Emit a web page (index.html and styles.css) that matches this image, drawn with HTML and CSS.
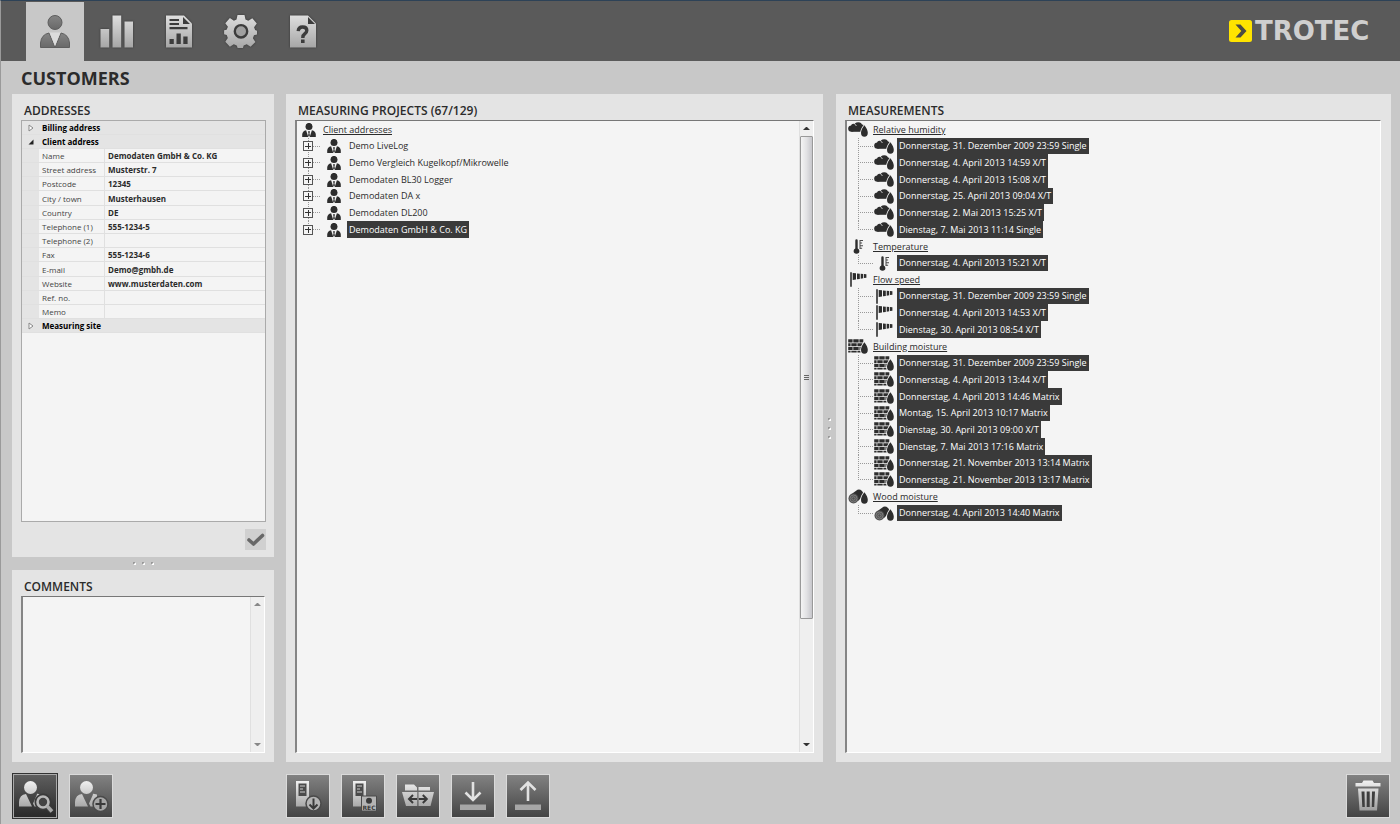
FILE: index.html
```html
<!DOCTYPE html>
<html lang="en">
<head>
<meta charset="utf-8">
<title>Customers</title>
<link rel="stylesheet" href="styles.css">
</head>
<body>
<svg class="sprite" aria-hidden="true">
  <defs>
    <linearGradient id="silver" x1="0" y1="0" x2="0" y2="1">
      <stop offset="0" stop-color="#dedede"/><stop offset="1" stop-color="#a6a6a6"/>
    </linearGradient>
    <linearGradient id="tool" gradientUnits="userSpaceOnUse" x1="0" y1="6" x2="0" y2="36">
      <stop offset="0" stop-color="#f0f0f0"/><stop offset="1" stop-color="#9c9c9c"/>
    </linearGradient>
    <linearGradient id="grey" x1="0" y1="0" x2="0" y2="1">
      <stop offset="0" stop-color="#858585"/><stop offset="1" stop-color="#686868"/>
    </linearGradient>
  </defs>
  <symbol id="person" viewBox="0 0 14 14">
    <ellipse cx="7" cy="3.500" rx="3.500" ry="3.600"/>
    <path d="M.2 14v-2.500q.2-3.400 3.900-4.200L6.300 14zM13.800 14v-2.500q-.2-3.400-3.900-4.200L7.700 14zM6.200 8.200h1.600l.2.800-.6.900.5 2.600-.9 1.300-.9-1.300.5-2.600-.6-.9z"/>
  </symbol>
  <symbol id="drop" viewBox="0 0 20 15">
    <path d="M16.400 3.200q3.400 4.300 3.400 7.600 0 4-3.400 4T13 10.800q0-3.300 3.400-7.600z" stroke="#f4f4f4" stroke-width="1.600" paint-order="stroke"/>
  </symbol>
  <symbol id="humidity" viewBox="0 0 20 15">
    <circle cx="3.400" cy="6.600" r="3.200"/><circle cx="5.600" cy="4.300" r="2.600"/><circle cx="10.200" cy="4.200" r="4"/><circle cx="13.800" cy="5.400" r="3"/>
    <path d="M3.400 5h10v4.800h-10z"/>
    <path d="M6.600 2.200q1.500.3 1.700 1.800" fill="none" stroke="#f4f4f4" stroke-width=".7"/>
    <use href="#drop"/>
  </symbol>
  <symbol id="temperature" viewBox="0 0 20 15">
    <path d="M7.300 1.500q0-1.200 1.200-1.200t1.200 1.200v8q1.700.8 1.700 2.500 0 2.700-2.900 2.700T5.600 12q0-1.700 1.700-2.500z"/>
    <path d="M11.500 1h1v9h-1zM12.500 1h2.500v1h-2.500zM12.500 3.600h1.600v1h-1.600zM12.500 6.200h2.500v1h-2.500zM12.500 8.800h1.600v1h-1.600z" opacity=".85"/>
  </symbol>
  <symbol id="flow" viewBox="0 0 20 15">
    <path d="M2.200.2h1.600v14.600H2.200zM4.700 1l3.300.3v6.200l-3.300.4zM9 1.500l2.800.2v5.200L9 7.300zM12.700 1.800l2.500.2v4.300l-2.500.4zM16 2.100l2.400.2v3.500l-2.400.3z"/>
  </symbol>
  <symbol id="building" viewBox="0 0 20 15">
    <path d="M.2.300h4.400v3.200H.2zM5.300.300h5.400v3.200H5.300zM11.400.300h3.900v3.200h-3.900zM.2 4.200h2.400v3.100H.2zM3.300 4.200h5.400v3.100H3.300zM9.400 4.200h5.200v3.100H9.400zM.2 8h4.400v3.100H.2zM5.300 8h5.400v3.100H5.300zM11.400 8h2v3.100h-2zM.2 11.800h2.400v1.700H.2zM3.300 11.800h5.400v1.700H3.300zM9.400 11.800h3.200v1.700H9.400z"/>
    <use href="#drop"/>
  </symbol>
  <symbol id="wood" viewBox="0 0 20 15">
    <path d="M1.500 6.500 9.500.7Q12 0 14 2t1.500 4.500L10 12z"/>
    <circle cx="5.500" cy="9.500" r="5" fill="#505050"/>
    <circle cx="5.500" cy="9.500" r="3.500" fill="none" stroke="#999" stroke-width=".6"/>
    <circle cx="5.500" cy="9.500" r="1.700" fill="none" stroke="#999" stroke-width=".6"/>
    <use href="#drop"/>
  </symbol>
  <symbol id="client" viewBox="0 0 42 42">
    <circle cx="16.500" cy="12.500" r="6.500"/>
    <path d="M5 31.500V27q.5-7.500 7-8l6 12.500zM27 19.500q-5.500-1.500-4 0l-4 9 1.500 3h7z"/>
  </symbol>
</svg>

<header class="topbar">
  <nav class="tabs" aria-label="Sections">
    <button class="tab tab-active" aria-label="Customers" aria-current="page">
      <svg viewBox="0 0 34 34"><g fill="url(#grey)" stroke="#5e5e5e"><circle cx="17" cy="8.500" r="7"/><path d="M2.500 33.500V29q.8-8.500 8.500-10l6 14.500zM31.500 33.500V29q-.8-8.500-8.500-10l-6 14.500z"/></g><path d="M11.500 18.500h11L17 32z" fill="#dcdcdc"/></svg>
    </button>
    <button class="tab" aria-label="Measurements">
      <svg viewBox="0 0 34 34"><path fill="url(#silver)" d="M.5 15h8.700v18.500H.5zM12.500 1.500h8.700v32h-8.700zM24.500 7.500h8.500v26h-8.500z"/></svg>
    </button>
    <button class="tab" aria-label="Reports">
      <svg viewBox="0 0 34 34"><path fill="url(#silver)" d="M4 1.500h18l8 8v24H4z"/><path fill="#3c3c3c" d="M21 3v7h7zM7.500 5h9.500v2H7.500zM7.500 9h9.500v2H7.500zM7.500 13h18v2.300h-18zM7.500 25h4.300v5H7.500zM14.500 19.500h4.300V30h-4.300zM21.300 22.500h4.300V30h-4.300z"/></svg>
    </button>
    <button class="tab" aria-label="Settings">
      <svg viewBox="0 0 34 34"><path fill="url(#silver)" d="M13.500 1h7l1 4.600 2.800 1.200 4-2.600 4.500 5.300-2.700 3.800 1 2.800 1.900.6v3.700l-3 .9-1.100 2.900 2.500 3.700-4.800 4.900-3.900-2.500-3 1.200-.9 3h-5l-1.100-3.100-2.900-1.200-3.900 2.500-4.600-5 2.500-3.700-1.100-2.900-2.600-.8v-4l2.500-.6 1.300-2.900L1.300 9.300 5.900 4l4 2.700 2.600-1.100z"/><circle cx="17" cy="17.300" r="6.200" fill="#a0a0a0" stroke="#3c3c3c" stroke-width="2.400"/></svg>
    </button>
    <button class="tab" aria-label="Help">
      <svg viewBox="0 0 34 34"><path fill="url(#silver)" d="M4 1.500h18l8 8v24H4z"/><path fill="#3c3c3c" d="M22 3v7h7z"/><path fill="none" stroke="#3c3c3c" stroke-width="3.400" d="M12.200 17.200q.3-4.200 4.400-4.200 4.200 0 4.200 3.600 0 2-2.200 3.400-1.800 1.100-1.800 4"/><path fill="#3c3c3c" d="M15 25.500h3.600V29H15z"/></svg>
    </button>
  </nav>
  <div class="brand">
    <svg viewBox="0 0 23 22" aria-hidden="true"><rect width="23" height="22" rx="2.500" fill="#ffe400"/><path fill="#4c4c44" d="M6.500 4.500h5L17.500 11l-6 6.500h-5L12.300 11z"/></svg>
    <span>TROTEC</span>
  </div>
</header>

<h1 class="page-title">CUSTOMERS</h1>

<main class="workspace">
  <div class="sidebar">
    <section class="panel addresses">
      <h2>ADDRESSES</h2>
      <div class="address-box">
        <table class="properties">
          <colgroup><col class="col-toggle"><col class="col-label"><col></colgroup>
          <tbody>
            <tr class="group"><td><button class="twisty" aria-label="Expand billing address"><svg viewBox="0 0 6 8"><path d="M1 1l4 3-4 3z" fill="#fff" stroke="#888"/></svg></button></td><th colspan="2" scope="rowgroup">Billing address</th></tr>
          </tbody>
          <tbody>
            <tr class="group"><td><button class="twisty" aria-label="Collapse client address"><svg viewBox="0 0 6 8"><path d="M5.500 1.500v5h-5z" fill="#222"/></svg></button></td><th colspan="2" scope="rowgroup">Client address</th></tr>
            <tr><td></td><th scope="row">Name</th><td>Demodaten GmbH &amp; Co. KG</td></tr>
            <tr><td></td><th scope="row">Street address</th><td>Musterstr. 7</td></tr>
            <tr><td></td><th scope="row">Postcode</th><td>12345</td></tr>
            <tr><td></td><th scope="row">City / town</th><td>Musterhausen</td></tr>
            <tr><td></td><th scope="row">Country</th><td>DE</td></tr>
            <tr><td></td><th scope="row">Telephone (1)</th><td>555-1234-5</td></tr>
            <tr><td></td><th scope="row">Telephone (2)</th><td></td></tr>
            <tr><td></td><th scope="row">Fax</th><td>555-1234-6</td></tr>
            <tr><td></td><th scope="row">E-mail</th><td>Demo@gmbh.de</td></tr>
            <tr><td></td><th scope="row">Website</th><td>www.musterdaten.com</td></tr>
            <tr><td></td><th scope="row">Ref. no.</th><td></td></tr>
            <tr><td></td><th scope="row">Memo</th><td></td></tr>
          </tbody>
          <tbody>
            <tr class="group"><td><button class="twisty" aria-label="Expand measuring site"><svg viewBox="0 0 6 8"><path d="M1 1l4 3-4 3z" fill="#fff" stroke="#888"/></svg></button></td><th colspan="2" scope="rowgroup">Measuring site</th></tr>
          </tbody>
        </table>
      </div>
      <div class="panel-actions">
        <button class="confirm" aria-label="Apply changes"><svg viewBox="0 0 21 21"><path d="M4 11l4.500 4L17.500 6.500" fill="none" stroke="#686868" stroke-width="3.600" stroke-linecap="round" stroke-linejoin="round"/></svg></button>
      </div>
    </section>
    <div class="splitter" aria-hidden="true"><i></i><i></i><i></i></div>
    <section class="panel comments">
      <h2><label for="comments">COMMENTS</label></h2>
      <div class="well">
        <textarea id="comments"></textarea>
        <div class="scroll scroll-off" aria-hidden="true"><i class="up"></i><i class="track"></i><i class="down"></i></div>
      </div>
    </section>
  </div>

  <section class="panel projects">
    <h2>MEASURING PROJECTS (67/129)</h2>
    <div class="well">
      <div class="tree">
        <div class="row root"><svg class="icon-person"><use href="#person"/></svg><a href="#clients">Client addresses</a></div>
        <ul id="clients">
          <li class="row"><button class="expander" aria-label="Expand"></button><i class="stub"></i><svg class="icon-person"><use href="#person"/></svg><button class="item">Demo LiveLog</button></li>
          <li class="row"><button class="expander" aria-label="Expand"></button><i class="stub"></i><svg class="icon-person"><use href="#person"/></svg><button class="item">Demo Vergleich Kugelkopf/Mikrowelle</button></li>
          <li class="row"><button class="expander" aria-label="Expand"></button><i class="stub"></i><svg class="icon-person"><use href="#person"/></svg><button class="item">Demodaten BL30 Logger</button></li>
          <li class="row"><button class="expander" aria-label="Expand"></button><i class="stub"></i><svg class="icon-person"><use href="#person"/></svg><button class="item">Demodaten DA x</button></li>
          <li class="row"><button class="expander" aria-label="Expand"></button><i class="stub"></i><svg class="icon-person"><use href="#person"/></svg><button class="item">Demodaten DL200</button></li>
          <li class="row"><button class="expander" aria-label="Expand"></button><i class="stub"></i><svg class="icon-person"><use href="#person"/></svg><button class="item selected">Demodaten GmbH &amp; Co. KG</button></li>
        </ul>
      </div>
      <div class="scroll" aria-hidden="true"><i class="up"></i><i class="thumb"><b></b><b></b><b></b></i><i class="track"></i><i class="down"></i></div>
    </div>
  </section>

  <div class="splitter splitter-vertical" aria-hidden="true"><i></i><i></i><i></i></div>

  <section class="panel measurements">
    <h2>MEASUREMENTS</h2>
    <div class="well">
      <div class="tree">
        <div class="row"><svg class="icon"><use href="#humidity"/></svg><a href="#humidity-list">Relative humidity</a></div>
        <ul id="humidity-list">
          <li class="row"><i class="branch"></i><svg class="icon"><use href="#humidity"/></svg><button class="item selected">Donnerstag, 31. Dezember 2009 23:59 Single</button></li>
          <li class="row"><i class="branch"></i><svg class="icon"><use href="#humidity"/></svg><button class="item selected">Donnerstag, 4. April 2013 14:59 X/T</button></li>
          <li class="row"><i class="branch"></i><svg class="icon"><use href="#humidity"/></svg><button class="item selected">Donnerstag, 4. April 2013 15:08 X/T</button></li>
          <li class="row"><i class="branch"></i><svg class="icon"><use href="#humidity"/></svg><button class="item selected">Donnerstag, 25. April 2013 09:04 X/T</button></li>
          <li class="row"><i class="branch"></i><svg class="icon"><use href="#humidity"/></svg><button class="item selected">Donnerstag, 2. Mai 2013 15:25 X/T</button></li>
          <li class="row"><i class="branch"></i><svg class="icon"><use href="#humidity"/></svg><button class="item selected">Dienstag, 7. Mai 2013 11:14 Single</button></li>
        </ul>
        <div class="row"><svg class="icon"><use href="#temperature"/></svg><a href="#temperature-list">Temperature</a></div>
        <ul id="temperature-list">
          <li class="row"><i class="branch"></i><svg class="icon"><use href="#temperature"/></svg><button class="item selected">Donnerstag, 4. April 2013 15:21 X/T</button></li>
        </ul>
        <div class="row"><svg class="icon"><use href="#flow"/></svg><a href="#flow-list">Flow speed</a></div>
        <ul id="flow-list">
          <li class="row"><i class="branch"></i><svg class="icon"><use href="#flow"/></svg><button class="item selected">Donnerstag, 31. Dezember 2009 23:59 Single</button></li>
          <li class="row"><i class="branch"></i><svg class="icon"><use href="#flow"/></svg><button class="item selected">Donnerstag, 4. April 2013 14:53 X/T</button></li>
          <li class="row"><i class="branch"></i><svg class="icon"><use href="#flow"/></svg><button class="item selected">Dienstag, 30. April 2013 08:54 X/T</button></li>
        </ul>
        <div class="row"><svg class="icon"><use href="#building"/></svg><a href="#building-list">Building moisture</a></div>
        <ul id="building-list">
          <li class="row"><i class="branch"></i><svg class="icon"><use href="#building"/></svg><button class="item selected">Donnerstag, 31. Dezember 2009 23:59 Single</button></li>
          <li class="row"><i class="branch"></i><svg class="icon"><use href="#building"/></svg><button class="item selected">Donnerstag, 4. April 2013 13:44 X/T</button></li>
          <li class="row"><i class="branch"></i><svg class="icon"><use href="#building"/></svg><button class="item selected">Donnerstag, 4. April 2013 14:46 Matrix</button></li>
          <li class="row"><i class="branch"></i><svg class="icon"><use href="#building"/></svg><button class="item selected">Montag, 15. April 2013 10:17 Matrix</button></li>
          <li class="row"><i class="branch"></i><svg class="icon"><use href="#building"/></svg><button class="item selected">Dienstag, 30. April 2013 09:00 X/T</button></li>
          <li class="row"><i class="branch"></i><svg class="icon"><use href="#building"/></svg><button class="item selected">Dienstag, 7. Mai 2013 17:16 Matrix</button></li>
          <li class="row"><i class="branch"></i><svg class="icon"><use href="#building"/></svg><button class="item selected">Donnerstag, 21. November 2013 13:14 Matrix</button></li>
          <li class="row"><i class="branch"></i><svg class="icon"><use href="#building"/></svg><button class="item selected">Donnerstag, 21. November 2013 13:17 Matrix</button></li>
        </ul>
        <div class="row"><svg class="icon"><use href="#wood"/></svg><a href="#wood-list">Wood moisture</a></div>
        <ul id="wood-list">
          <li class="row"><i class="branch"></i><svg class="icon"><use href="#wood"/></svg><button class="item selected">Donnerstag, 4. April 2013 14:40 Matrix</button></li>
        </ul>
      </div>
    </div>
  </section>
</main>

<footer class="toolbar">
  <div class="tools tools-client">
    <button class="tool tool-active" aria-label="Find customer">
      <svg viewBox="0 0 42 42"><g fill="url(#tool)"><use href="#client"/></g><circle cx="29" cy="27" r="5.500" fill="#444" stroke="#3a3a3a" stroke-width="6"/><path d="M33 31l5 5.500" stroke="#3a3a3a" stroke-width="6"/><circle cx="29" cy="27" r="5.500" fill="#444" stroke="#b9b9b9" stroke-width="2.600"/><path d="M33 31l5 5.500" stroke="#a8a8a8" stroke-width="3.600"/></svg>
    </button>
    <button class="tool" aria-label="Add customer">
      <svg viewBox="0 0 42 42"><g fill="url(#tool)"><use href="#client"/></g><circle cx="30.500" cy="29" r="7.500" fill="#a6a6a6" stroke="#4a4a4a" stroke-width="1.500"/><path d="M30.500 24v10M25.500 29h10" stroke="#3a3a3a" stroke-width="2.200"/></svg>
    </button>
  </div>
  <div class="tools">
    <button class="tool" aria-label="Download from device">
      <svg viewBox="0 0 42 42"><path fill="url(#tool)" d="M9 6h13v25.500H9z"/><path fill="#4a4a4a" d="M11.500 8.500h8V21h-8z"/><path d="M13 11h5M13 14h3M13 17h5" stroke="#ccc"/><circle cx="26.500" cy="28.500" r="7.500" fill="#b4b4b4" stroke="#4a4a4a" stroke-width="1.500"/><path d="M26.500 23.500v9M22.500 29.500l4 4 4-4" fill="none" stroke="#3a3a3a" stroke-width="2"/></svg>
    </button>
    <button class="tool" aria-label="Record from device">
      <svg viewBox="0 0 42 42"><path fill="url(#tool)" d="M11 6h13v25.500H11z"/><path fill="#4a4a4a" d="M13.500 8.500h8V21h-8z"/><path d="M15 11h5M15 14h3M15 17h5" stroke="#ccc"/><path d="M19.500 21h15v15h-15z" fill="#b4b4b4" stroke="#4a4a4a"/><circle cx="27" cy="25.700" r="3" fill="#3a3a3a"/><text class="rec" x="27" y="34.500" text-anchor="middle">REC</text></svg>
    </button>
    <button class="tool" aria-label="Move between projects">
      <svg viewBox="0 0 42 42"><path fill="url(#tool)" d="M8 15.500V9.500h9l3 3v3zM21.500 15.500v-3.500h11.500v3.500zM5 17h15.300v14H9zM21.500 17H37l-3.500 14h-12z"/><path d="M12.500 24h7.500M16 20l-4 4 4 4M21.800 24h7.500M25.800 20l4 4-4 4" fill="none" stroke="#3a3a3a" stroke-width="2"/></svg>
    </button>
    <button class="tool" aria-label="Import">
      <svg viewBox="0 0 42 42"><path d="M21 7v17M13.500 17.500l7.500 7.500 7.500-7.500" fill="none" stroke="#e2e2e2" stroke-width="2.600"/><path d="M8 29.500h26v5.500H8z" fill="#a6a6a6"/></svg>
    </button>
    <button class="tool" aria-label="Export">
      <svg viewBox="0 0 42 42"><path d="M21 26V8M13.500 15l7.500-7.500 7.500 7.500" fill="none" stroke="#e2e2e2" stroke-width="2.600"/><path d="M8 29.500h26v5.500H8z" fill="#a6a6a6"/></svg>
    </button>
  </div>
  <button class="tool tool-delete" aria-label="Delete">
    <svg viewBox="0 0 42 42"><path fill="url(#tool)" d="M8.500 8H15l1.500-2.500h9L27 8h6.500v3.500h-25zM11 13.500h20.500L30 35.500H12.500z"/><path fill="#3e3e3e" d="M14.500 16.500h3l.3 15.500h-2.500zM19.700 16.500h3V32h-3zM25 16.500h3L27.200 32h-2.400z"/></svg>
  </button>
</footer>
</body>
</html>
```
FILE: styles.css
```css
* { box-sizing: border-box; }

body {
  margin: 0;
  min-height: 100vh;
  display: flex;
  flex-direction: column;
  background: #c8c8c8;
  border-top: 1px solid #2d4257;
  border-left: 1px solid #9a9a9a;
  color: #2b2b2b;
  font: 9px/14px "Open Sans", "Noto Sans", sans-serif;
}

button {
  margin: 0;
  padding: 0;
  border: 0;
  background: none;
  color: inherit;
  font: inherit;
}

svg { display: block; }
.sprite { position: absolute; width: 0; height: 0; }

/* Top bar */
.topbar {
  display: flex;
  justify-content: space-between;
  height: 60px;
  padding: 1px 15px 0 25px;
  background: #5a5a5a;
}

.tabs { display: flex; gap: 4px; }

.tab {
  width: 58px;
  padding: 0 12px 2px;
}

.tab svg {
  width: 34px;
  height: 34px;
  filter: drop-shadow(0 0 1px #333);
}

.tab-active { background: #c8c8c8; }
.tab-active svg { filter: none; }

.brand {
  display: flex;
  align-items: center;
  gap: 3px;
  width: 156px;
  padding-bottom: 2px;
  color: #cfcfcf;
  font: bold 26px/26px "DejaVu Sans", sans-serif;
}

.brand svg { width: 23px; height: 22px; }

.page-title {
  margin: 0;
  padding: 5px 20px 4px;
  font-size: 18px;
  line-height: 24px;
}

/* Panels */
.workspace {
  flex: 1;
  display: grid;
  grid-template-columns: 274px minmax(0, 537fr) 13px minmax(0, 555fr);
  padding: 0 9px 0 11px;
}

.sidebar {
  display: flex;
  flex-direction: column;
  padding-right: 12px;
}

.panel {
  display: flex;
  flex-direction: column;
  padding: 8px 9px 9px;
  background: #e4e4e4;
}

.addresses { flex: 1; padding: 8px 8px 7px 9px; }
.comments { flex: 0 0 192px; }

.panel h2 {
  margin: 0;
  padding-left: 3px;
  font-size: 12px;
  font-weight: 600;
  line-height: 18px;
}

.splitter {
  display: flex;
  align-items: center;
  justify-content: center;
  gap: 6px;
  height: 13px;
}

.splitter i {
  width: 3px;
  height: 3px;
  border: 1px solid #fff;
  border-top-color: #999;
  border-left-color: #999;
}

.splitter-vertical { flex-direction: column; height: auto; }

.well {
  flex: 1;
  display: flex;
  border: 1px solid #fff;
  border-top-color: #777;
  border-left: 2px solid #858585;
  background: #f4f4f4;
}

/* Address table */
.address-box {
  flex: 1;
  border: 1px solid #aaa;
  background: #f4f4f4;
}

.properties {
  width: 100%;
  table-layout: fixed;
  border-collapse: separate;
  border-spacing: 0;
  font-size: 8px;
  line-height: 13px;
}

.col-toggle { width: 17px; }
.col-label { width: 66px; }

.properties td, .properties th {
  height: 14px;
  padding: 0 3px;
  border-bottom: 1px solid #e0e0e0;
  text-align: left;
  font-weight: 400;
  white-space: nowrap;
  color: #444;
}

.properties tr:nth-child(5n) > * { height: 15px; }
.properties td:first-child { background: #e4e4e4; }
.properties th[scope="row"] { border-right: 1px solid #e0e0e0; }
.properties td:last-child { font-weight: 700; color: #2b2b2b; }

.properties .group > * {
  background: #e4e4e4;
  font-weight: 700;
  color: #000;
}

.twisty { display: block; padding-left: 3px; }
.twisty svg { width: 6px; height: 8px; }

.panel-actions {
  display: flex;
  justify-content: flex-end;
  padding-top: 7px;
}

.confirm { background: #d0d0d0; }
.confirm svg { width: 21px; height: 21px; }

.comments textarea {
  flex: 1;
  min-width: 0;
  border: 0;
  padding: 3px;
  background: transparent;
  font: inherit;
  resize: none;
}

/* Scroll bars */
.scroll {
  display: flex;
  flex-direction: column;
  width: 14px;
  border-left: 1px solid #e0e0e0;
  background: #efefef;
}

.up, .down { height: 15px; padding: 6px 3px; }

.up::before, .down::before {
  content: "";
  display: block;
  border: 3px solid transparent;
  border-top: 0;
  border-bottom-color: #333;
}

.down::before {
  border-top: 3px solid #333;
  border-bottom: 0;
}

.scroll-off .up::before { border-bottom-color: #888; }
.scroll-off .down::before { border-top-color: #888; }

.track { flex: 118; }

.thumb {
  flex: 483;
  display: flex;
  flex-direction: column;
  align-items: center;
  justify-content: center;
  gap: 1px;
  border: 1px solid #999;
  border-radius: 1px;
  background: linear-gradient(90deg, #f4f4f4, #e2e2e4 50%, #c6c6cb);
}

.thumb b { width: 5px; height: 1px; background: #666; }

/* Trees */
.tree { flex: 1; min-width: 0; }
.tree ul { margin: 0; padding: 0; list-style: none; }

.row {
  display: flex;
  align-items: center;
  height: 17px;
  line-height: 16px;
  white-space: nowrap;
}

.row:nth-child(3n+1):is(li) { height: 16px; }
.row a { color: inherit; text-underline-offset: 1px; }
.row svg { fill: #2d2d2d; }
.row .item { align-self: stretch; padding: 0 2px; line-height: 16px; }
.row .selected { background: #3a3a3a; color: #fff; }

.icon-person { width: 14px; height: 14px; }
.projects .root { gap: 7px; padding-left: 5px; }

.projects li {
  padding-left: 6px;
  background: repeating-linear-gradient(#999 0 1px, transparent 1px 2px) 11px 0 / 1px 100% no-repeat;
}

.projects li .icon-person { margin: 0 6px; }
.projects li:last-child { background-size: 1px 50%; }

.expander {
  width: 10px;
  height: 10px;
  border: 1px solid #555;
  background:
    linear-gradient(#333, #333) center / 6px 1px no-repeat,
    linear-gradient(#333, #333) center / 1px 6px no-repeat,
    #f4f4f4;
}

.stub {
  width: 8px;
  height: 1px;
  background: repeating-linear-gradient(90deg, #999 0 1px, transparent 1px 2px);
}

.icon { width: 20px; height: 15px; }
.measurements { padding-right: 10px; }
.measurements div.row { gap: 5px; padding-left: 1px; }
.measurements li { padding-left: 11px; }
.measurements li .icon { margin: 0 3px 0 1px; }

.branch {
  align-self: stretch;
  width: 15px;
  background:
    repeating-linear-gradient(#999 0 1px, transparent 1px 2px) 0 0 / 1px 100% no-repeat,
    repeating-linear-gradient(90deg, #999 0 1px, transparent 1px 2px) 0 8px / 15px 1px no-repeat;
}

.measurements li:last-child .branch { background-size: 1px 50%, 15px 1px; }

/* Bottom toolbar */
.toolbar {
  display: flex;
  align-items: center;
  height: 62px;
  padding: 6px 11px 0 13px;
}

.tools { display: flex; gap: 13px; }
.tools-client { width: 273px; gap: 14px; }

.tool {
  width: 42px;
  height: 42px;
  background: linear-gradient(#828282, #444);
  outline: 1px solid #dadada;
}

.tool svg { width: 42px; height: 42px; }

.tool-active {
  background: linear-gradient(#5e5e5e, #2a2a2a);
  outline-color: #aaa;
  box-shadow: 0 0 0 2px #333;
}

.tool-delete { margin-left: auto; }

.rec {
  fill: #3a3a3a;
  font: bold 6px "DejaVu Sans", sans-serif;
}
```
